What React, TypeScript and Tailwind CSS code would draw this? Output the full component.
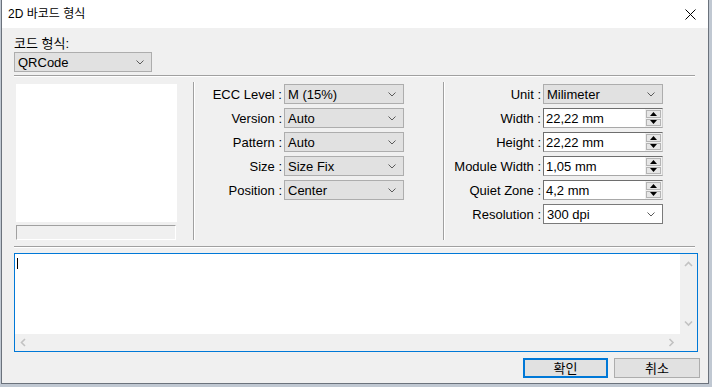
import React from 'react';

const FONT = "font-['Liberation_Sans','Noto_Sans_CJK_KR',sans-serif]";

const Chevron: React.FC = () => (
  <svg width="8" height="5" viewBox="0 0 8 5" className="shrink-0">
    <path d="M0.5 0.5 L4 4 L7.5 0.5" fill="none" stroke="#5a5a5a" strokeWidth="1" />
  </svg>
);

// Windows-style combo box (read-only dropdown)
const Combo: React.FC<{ value: string; width: string; white?: boolean }> = ({ value, width, white }) => (
  <div
    className={`${width} h-[20px] flex items-center justify-between pl-[3px] pr-[7px] border ${
      white ? 'bg-white border-[#7a7a7a]' : 'bg-[#e1e1e1] border-[#adadad]'
    }`}
  >
    <span className="text-[13px] leading-none text-black">{value}</span>
    <Chevron />
  </div>
);

const Triangle: React.FC<{ up?: boolean }> = ({ up }) => (
  <svg width="7" height="4" viewBox="0 0 7 4">
    <path d={up ? 'M3.5 0 L7 4 L0 4 Z' : 'M0 0 L7 0 L3.5 4 Z'} fill="#000" />
  </svg>
);

const SpinInput: React.FC<{ value: string }> = ({ value }) => (
  <div className="w-[120px] h-[20px] flex border-t border-l border-[#6e6e6e] border-b border-b-[#a8a8a8] border-r border-r-[#cfcfcf] bg-white">
    <div className="flex-1 flex items-center pl-[2px] text-[13px] leading-none text-black">{value}</div>
    <div className="w-[17px] flex flex-col bg-[#f0f0f0] p-[1px] gap-[1px]">
      <div className="flex-1 flex items-center justify-center bg-[#e6e6e6] border border-[#b4b4b4]">
        <Triangle up />
      </div>
      <div className="flex-1 flex items-center justify-center bg-[#e6e6e6] border border-[#b4b4b4]">
        <Triangle />
      </div>
    </div>
  </div>
);

const Row: React.FC<{ label: string; labelWidth: string; children: React.ReactNode }> = ({ label, labelWidth, children }) => (
  <div className="flex items-center h-[20px]">
    <div className={`${labelWidth} text-right text-[13px] leading-none text-black pr-[2px] whitespace-nowrap`}>{label}</div>
    {children}
  </div>
);

const HSep: React.FC<{ width: string }> = ({ width }) => (
  <div className={`${width} h-[2px] border-t border-[#a0a0a0] border-b border-b-white`} />
);

const VSep: React.FC = () => <div className="w-[2px] h-[158px] border-l border-[#a0a0a0] border-r border-r-white" />;

const ScrollArrow: React.FC<{ dir: 'up' | 'down' | 'left' | 'right' }> = ({ dir }) => {
  const d = {
    up: 'M1 5 L4.5 1.5 L8 5',
    down: 'M1 1.5 L4.5 5 L8 1.5',
    left: 'M5 1 L1.5 4.5 L5 8',
    right: 'M1.5 1 L5 4.5 L1.5 8',
  }[dir];
  const horiz = dir === 'left' || dir === 'right';
  return (
    <svg width={horiz ? 7 : 9} height={horiz ? 9 : 7} viewBox={horiz ? '0 0 7 9' : '0 0 9 7'}>
      <path d={d} fill="none" stroke="#c2c2c2" strokeWidth="1.6" />
    </svg>
  );
};

export default function App() {
  return (
    <div className={`w-[712px] h-[387px] bg-[#c0c8d2] overflow-hidden ${FONT}`}>
      <div className="w-[708px] h-[384px] ml-[1px] bg-[#f0f0f0] border-l border-r border-b border-[#6b727c] flex flex-col">
        {/* Title bar */}
        <div className="h-[28px] bg-white flex items-center justify-between pl-[6px] pr-[12px] shrink-0">
          <span className="text-[12px] text-black leading-none">2D 바코드 형식</span>
          <svg width="11" height="11" viewBox="0 0 11 11">
            <path d="M0.5 0.5 L10.5 10.5 M10.5 0.5 L0.5 10.5" stroke="#000" strokeWidth="1" />
          </svg>
        </div>

        {/* Body */}
        <div className="flex flex-col pl-[12px]">
          <div className="mt-[7px] h-[16px] text-[13px] leading-none text-black flex items-center">코드 형식:</div>
          <div className="mt-[1px]">
            <Combo value="QRCode" width="w-[138px]" />
          </div>
          <div className="mt-[3px]">
            <HSep width="w-[681px]" />
          </div>

          {/* Settings area */}
          <div className="mt-[5px] flex h-[159px]">
            {/* Preview */}
            <div className="w-[179px] pl-[2px] pt-[2px] flex flex-col">
              <div className="w-[161px] h-[138px] bg-white" />
              <div className="mt-[3px] w-[160px] h-[15px] border-t border-l border-[#a0a0a0] border-b border-r border-b-white border-r-white" />
            </div>
            <VSep />

            {/* Barcode options */}
            <div className="w-[248px] pt-[2px] flex flex-col gap-[4px]">
              <Row label="ECC Level :" labelWidth="w-[89px]">
                <Combo value="M (15%)" width="w-[120px]" />
              </Row>
              <Row label="Version :" labelWidth="w-[89px]">
                <Combo value="Auto" width="w-[120px]" />
              </Row>
              <Row label="Pattern :" labelWidth="w-[89px]">
                <Combo value="Auto" width="w-[120px]" />
              </Row>
              <Row label="Size :" labelWidth="w-[89px]">
                <Combo value="Size Fix" width="w-[120px]" />
              </Row>
              <Row label="Position :" labelWidth="w-[89px]">
                <Combo value="Center" width="w-[120px]" />
              </Row>
            </div>
            <VSep />

            {/* Dimension options */}
            <div className="pt-[2px] flex flex-col gap-[4px]">
              <Row label="Unit :" labelWidth="w-[98px]">
                <Combo value="Milimeter" width="w-[120px]" />
              </Row>
              <Row label="Width :" labelWidth="w-[98px]">
                <SpinInput value="22,22 mm" />
              </Row>
              <Row label="Height :" labelWidth="w-[98px]">
                <SpinInput value="22,22 mm" />
              </Row>
              <Row label="Module Width :" labelWidth="w-[98px]">
                <SpinInput value="1,05 mm" />
              </Row>
              <Row label="Quiet Zone :" labelWidth="w-[98px]">
                <SpinInput value="4,2 mm" />
              </Row>
              <Row label="Resolution :" labelWidth="w-[98px]">
                <Combo value="300 dpi" width="w-[120px]" white />
              </Row>
            </div>
          </div>

          <div className="mt-[5px]">
            <HSep width="w-[681px]" />
          </div>

          {/* Data text box */}
          <div className="mt-[5px] w-[684px] h-[99px] border border-[#0078d7] flex flex-col bg-[#f0f0f0]">
            <div className="flex h-[80px]">
              <div className="flex-1 bg-white pl-[2px] pt-[4px]">
                <div className="w-[1px] h-[11px] bg-black" />
              </div>
              <div className="w-[17px] flex flex-col items-center justify-between py-[7px]">
                <ScrollArrow dir="up" />
                <ScrollArrow dir="down" />
              </div>
            </div>
            <div className="flex-1 flex items-center justify-between pl-[5px] pr-[22px]">
              <ScrollArrow dir="left" />
              <ScrollArrow dir="right" />
            </div>
          </div>

          {/* Buttons */}
          <div className="mt-[6px] w-[686px] flex justify-end gap-[6px]">
            <div className="w-[85px] h-[20px] border-2 border-[#0078d7] bg-[#e1e1e1] flex items-center justify-center text-[13px] leading-none text-black">
              확인
            </div>
            <div className="w-[86px] h-[20px] border border-[#adadad] bg-[#e1e1e1] flex items-center justify-center text-[13px] leading-none text-black">
              취소
            </div>
          </div>
        </div>
      </div>
    </div>
  );
}
